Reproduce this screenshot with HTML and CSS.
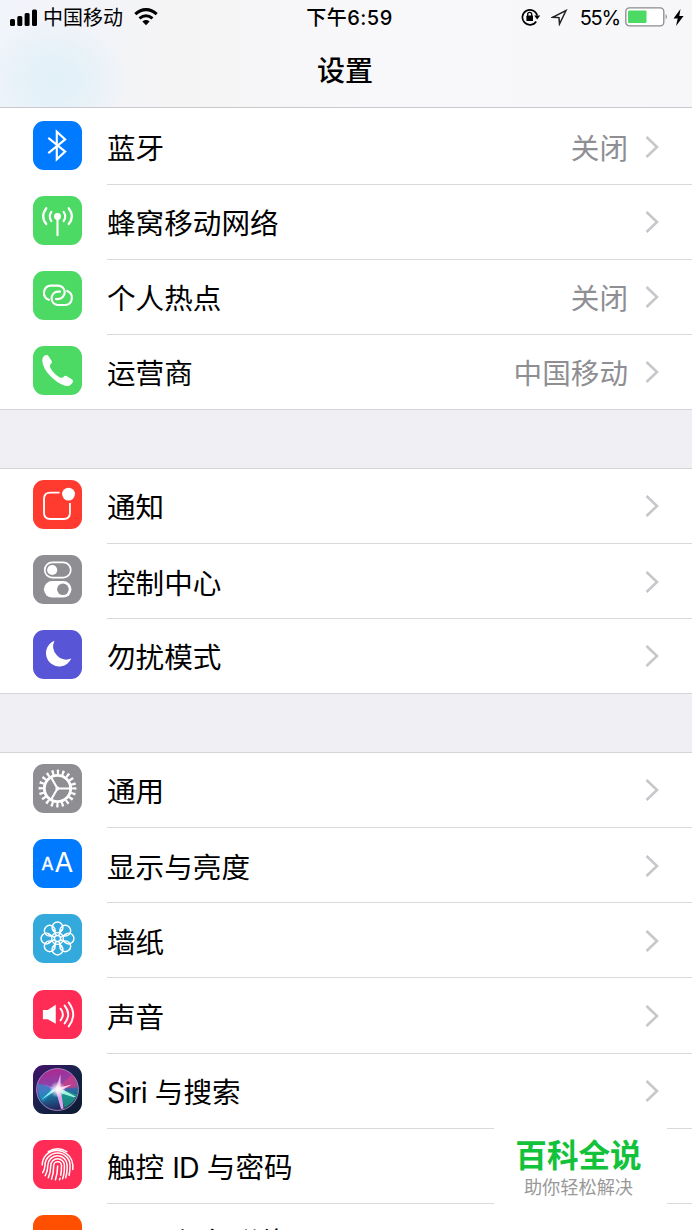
FILE: index.html
```
<!DOCTYPE html>
<html lang="zh-CN">
<head>
  <meta charset="UTF-8">
  <meta name="viewport" content="width=device-width, initial-scale=1.0">
  <title>设置</title>
  <link rel="stylesheet" href="styles.css">
</head>
<body>
  <svg width="0" height="0" class="defs">
    <symbol id="chevron" viewBox="0 0 14 24">
      <path d="M1.5 2 L12 12 L1.5 22" fill="none" stroke="#c7c7cc" stroke-width="2.6"/>
    </symbol>
  </svg>

  <header class="header">
    <div class="status">
      <div class="status-left">
        <svg class="signal" width="28" height="17" viewBox="0 0 28 17">
          <rect x="0" y="10" width="5" height="7" rx="1.5"/>
          <rect x="7.3" y="7" width="5" height="10" rx="1.5"/>
          <rect x="14.6" y="4" width="5" height="13" rx="1.5"/>
          <rect x="22" y="0.5" width="5" height="16.5" rx="1.5"/>
        </svg>
        <span class="carrier">中国移动</span>
        <svg class="wifi" width="24" height="18" viewBox="0 0 24 18">
          <path d="M1.3 6.1 Q12 -2.9 22.7 6.1" fill="none" stroke="#000" stroke-width="3.1"/>
          <path d="M5.5 10.4 Q12 5 18.5 10.4" fill="none" stroke="#000" stroke-width="3"/>
          <path d="M8.4 13.4 Q12 10.5 15.6 13.4 L12 17.2 Z"/>
        </svg>
      </div>
      <span class="clock">下午6:59</span>
      <div class="status-right">
        <svg class="lock" width="20" height="18" viewBox="0 0 20 18">
          <path d="M15.2 13.5 A7.5 7.5 0 1 1 16.2 7.5" fill="none" stroke="#000" stroke-width="1.7"/>
          <path d="M13.2 7.5 H19.2 L16.2 11.5 Z"/>
          <rect x="5.4" y="7.6" width="6.6" height="5.4" rx="0.6"/>
          <path d="M6.7 8 V6.3 a2 2 0 0 1 4 0 V8" fill="none" stroke="#000" stroke-width="1.3"/>
        </svg>
        <svg class="location" width="17" height="17" viewBox="0 0 17 17">
          <path d="M1.5 8.3 L15 1.5 L8.5 15 L8 8.6 Z" fill="none" stroke="#222" stroke-width="1.5"/>
        </svg>
        <span class="percent">55%</span>
        <svg class="battery" width="44" height="20" viewBox="0 0 44 20">
          <rect x="0.8" y="0.8" width="38" height="18" rx="3.6" fill="#fff" stroke="#8b8b8e" stroke-width="1.3"/>
          <rect x="3" y="3.5" width="18.5" height="12.5" rx="1" fill="#4cd964"/>
          <path d="M40.6 7 Q43.3 9.5 40.6 12.5 Z" fill="#8b8b8e"/>
        </svg>
        <svg class="bolt" width="11" height="17" viewBox="0 0 11 17">
          <path d="M7.5 0 L0.5 9.5 H4.7 L3 17 L10.6 7 H6.3 Z"/>
        </svg>
      </div>
    </div>
    <h1 class="title">设置</h1>
  </header>

  <main>
    <section class="group first">
      <div class="row">
        <svg class="icon blue" viewBox="0 0 48 48">
          <path d="M15 16.5 L31.5 30 L23.3 37.5 V10.5 L31.5 18 L15 31.5" fill="none" stroke="#fff" stroke-width="2.1"/>
        </svg>
        <div class="body"><span class="label">蓝牙</span><span class="value">关闭</span><svg class="chevron"><use href="#chevron"/></svg></div>
      </div>
      <div class="row">
        <svg class="icon green" viewBox="0 0 48 48">
          <circle cx="24" cy="20" r="3.4" fill="#fff"/>
          <g fill="none" stroke="#fff" stroke-width="2.1" stroke-linecap="round">
            <path d="M24 20 V38.5"/>
            <path d="M18 15.5 Q14.8 20 18 24.5 M30 15.5 Q33.2 20 30 24.5"/>
            <path d="M13 12 Q6.8 20 13 27.5 M35 12 Q41.2 20 35 27.5" stroke-width="2.3"/>
          </g>
        </svg>
        <div class="body"><span class="label">蜂窝移动网络</span><svg class="chevron"><use href="#chevron"/></svg></div>
      </div>
      <div class="row">
        <svg class="icon green" viewBox="0 0 48 48">
          <g fill="none" stroke="#fff" stroke-width="2.1" stroke-linecap="round">
            <path d="M15.5 28.2 A7.2 7.2 0 0 1 17 14.3 H24.5 A6.6 6.6 0 0 1 24.5 27.5 H22.5"/>
            <path d="M33.5 19.5 A7.2 7.2 0 0 1 32 33.3 H24 A6.6 6.6 0 0 1 24 20.2 H26.5"/>
          </g>
        </svg>
        <div class="body"><span class="label">个人热点</span><span class="value">关闭</span><svg class="chevron"><use href="#chevron"/></svg></div>
      </div>
      <div class="row">
        <svg class="icon green" viewBox="0 0 48 48">
          <path d="M9.500 11.500 Q10.500 9 13.200 8.700 Q14.500 8.700 15.300 10 L18.300 14.800 Q19 16.300 17.700 17.500 Q15.800 18.800 16.800 21 Q20.500 27.800 26.800 31 Q28.600 31.700 30 30 Q31.200 28.700 32.800 29.500 L38 32.500 Q39.800 33.700 39 35.200 Q37.200 38.800 34 39.200 Q29.500 39.300 22.800 34.500 Q12.500 27.200 9.500 17.500 Q8.500 13.800 9.500 11.500 Z" fill="#fff"/>
        </svg>
        <div class="body"><span class="label">运营商</span><span class="value">中国移动</span><svg class="chevron"><use href="#chevron"/></svg></div>
      </div>
    </section>

    <section class="group">
      <div class="row">
        <svg class="icon red" viewBox="0 0 48 48">
          <path d="M26 12.3 H17 Q10.8 12.3 10.8 18.5 V32 Q10.8 38.2 17 38.2 H30 Q36.2 38.2 36.2 32 V22.5" fill="none" stroke="#fff" stroke-width="1.8"/>
          <circle cx="34.8" cy="13.8" r="6.3" fill="#fff"/>
        </svg>
        <div class="body"><span class="label">通知</span><svg class="chevron"><use href="#chevron"/></svg></div>
      </div>
      <div class="row">
        <svg class="icon gray" viewBox="0 0 48 48">
          <rect x="11.5" y="7.3" width="25.5" height="14.8" rx="7.4" fill="none" stroke="#fff" stroke-width="1.7"/>
          <circle cx="18.8" cy="14.7" r="5" fill="#fff"/>
          <rect x="10.7" y="25.5" width="27" height="16.2" rx="8.1" fill="#fff"/>
          <circle cx="29.3" cy="33.6" r="5.7" fill="#8e8e93"/>
        </svg>
        <div class="body"><span class="label">控制中心</span><svg class="chevron"><use href="#chevron"/></svg></div>
      </div>
      <div class="row">
        <svg class="icon purple" viewBox="0 0 48 48">
          <path d="M21 10.5 A13 13 0 1 0 37.5 28 A13 13 0 0 1 21 10.5 Z" fill="#fff"/>
        </svg>
        <div class="body"><span class="label">勿扰模式</span><svg class="chevron"><use href="#chevron"/></svg></div>
      </div>
    </section>

    <section class="group">
      <div class="row">
        <svg class="icon gray" viewBox="0 0 48 48">
          <g fill="none" stroke="#fff">
            <circle cx="24" cy="24" r="16.2" stroke-width="4.6" stroke-dasharray="2.2 2.89" transform="rotate(-4 24 24)"/>
            <circle cx="24" cy="24" r="12.9" stroke-width="2.8"/>
            <path d="M24 24 H37 M24 24 L17.5 12.7 M24 24 L17.5 35.3" stroke-width="2.1"/>
          </g>
          <circle cx="24" cy="24" r="2" fill="#fff"/>
        </svg>
        <div class="body"><span class="label">通用</span><svg class="chevron"><use href="#chevron"/></svg></div>
      </div>
      <div class="row">
        <svg class="icon blue" viewBox="0 0 48 48">
          <g class="letters" fill="#fff">
            <text x="8.3" y="30.6" font-size="17" stroke="#fff" stroke-width="0.4">A</text>
            <text x="21" y="32.3" font-size="26.5">A</text>
          </g>
        </svg>
        <div class="body"><span class="label">显示与亮度</span><svg class="chevron"><use href="#chevron"/></svg></div>
      </div>
      <div class="row">
        <svg class="icon cyan" viewBox="0 0 48 48">
          <g fill="none" stroke="#fff" stroke-width="1.4">
            <circle cx="24" cy="13.2" r="5.3"/>
            <circle cx="31.6" cy="16.4" r="5.3"/>
            <circle cx="34.8" cy="24" r="5.3"/>
            <circle cx="31.6" cy="31.6" r="5.3"/>
            <circle cx="24" cy="34.8" r="5.3"/>
            <circle cx="16.4" cy="31.6" r="5.3"/>
            <circle cx="13.2" cy="24" r="5.3"/>
            <circle cx="16.4" cy="16.4" r="5.3"/>
            <circle cx="24" cy="24" r="3"/>
            <path d="M22.8 21 L19.8 15 M25.2 21 L28.2 15 M27 22.8 L33 19.8 M27 25.2 L33 28.2 M25.2 27 L28.2 33 M22.8 27 L19.8 33 M21 25.2 L15 28.2 M21 22.8 L15 19.8"/>
          </g>
        </svg>
        <div class="body"><span class="label">墙纸</span><svg class="chevron"><use href="#chevron"/></svg></div>
      </div>
      <div class="row">
        <svg class="icon pink" viewBox="0 0 48 48">
          <path d="M9.7 19.5 H14.5 L22.3 14.5 V33 L14.5 28.7 H9.7 Z" fill="#fff"/>
          <g fill="none" stroke="#fff" stroke-width="1.9" stroke-linecap="round">
            <path d="M27 18.3 Q31.5 24 27 29.7"/>
            <path d="M31 15.3 Q38 24 31 32.7"/>
            <path d="M35 12.3 Q43.8 24 35 35.7"/>
          </g>
        </svg>
        <div class="body"><span class="label">声音</span><svg class="chevron"><use href="#chevron"/></svg></div>
      </div>
      <div class="row">
        <svg class="icon siri" viewBox="0 0 48 48">
          <defs>
            <linearGradient id="siri-bg" x1="0" y1="0" x2="1" y2="1">
              <stop offset="0" stop-color="#43126a"/>
              <stop offset="0.5" stop-color="#17224b"/>
              <stop offset="1" stop-color="#0c1a2c"/>
            </linearGradient>
            <linearGradient id="siri-orb" x1="0.4" y1="0" x2="0.6" y2="1">
              <stop offset="0" stop-color="#b0278f"/>
              <stop offset="0.45" stop-color="#7e4bb0"/>
              <stop offset="0.62" stop-color="#1c6f9c"/>
              <stop offset="1" stop-color="#26194f"/>
            </linearGradient>
            <radialGradient id="siri-glow">
              <stop offset="0" stop-color="#fff"/>
              <stop offset="0.3" stop-color="#fff" stop-opacity="0.8"/>
              <stop offset="1" stop-color="#fff" stop-opacity="0"/>
            </radialGradient>
          </defs>
          <rect width="48" height="48" fill="url(#siri-bg)"/>
          <circle cx="24" cy="24" r="20.5" fill="url(#siri-orb)" stroke="#a98fc4" stroke-width="0.9"/>
          <path d="M24 23 L4.5 18 Q5 32 10 36 Z" fill="#1b9cd0" opacity="0.6"/>
          <path d="M24 23 L43 29 Q40 38 31 42 Z" fill="#19a98a" opacity="0.7"/>
          <path d="M24 23 L38 9 Q43 15 43 22 Z" fill="#d43d82" opacity="0.7"/>
          <path d="M24 24 L8 34 L21 22 Z" fill="#8ff3f2"/>
          <path d="M24 21 L42 31 L40 31.5 L22 26 Z" fill="#a0f5dc"/>
          <path d="M22 24 L27.5 43 L30 42.5 L27 23 Z" fill="#e3a4ee"/>
          <path d="M22 24 L27 9 L27 24 Z" fill="#efb0dc"/>
          <path d="M21 23 L38 19 L26 26 Z" fill="#f7c5e4"/>
          <path d="M26 24 L9 18 L23 26 Z" fill="#b36be0" opacity="0.7"/>
          <circle cx="24" cy="24" r="8" fill="url(#siri-glow)"/>
        </svg>
        <div class="body"><span class="label"><span class="latin">Siri</span> 与搜索</span><svg class="chevron"><use href="#chevron"/></svg></div>
      </div>
      <div class="row">
        <svg class="icon pink" viewBox="0 0 48 48">
          <g fill="none" stroke="#fff" stroke-width="1.5" stroke-linecap="round">
            <path d="M15 11.3 Q24 6 33 11.3"/>
            <path d="M9 24.5 Q9.300 18.500 13 14.500 A15.500 15.500 0 0 1 39 24.500 V29"/>
            <path d="M9.5 32 Q11.500 29 11.700 25 A12.300 12.300 0 0 1 36.300 25 Q36.300 31 35.300 34.500"/>
            <path d="M12 35 Q14.400 31 14.500 25 A9.500 9.500 0 0 1 33.500 25 Q33.500 32.500 32 37"/>
            <path d="M15 37 Q17.300 32 17.400 25 A6.700 6.700 0 0 1 30.800 25 Q30.800 33.500 29 38"/>
            <path d="M18.200 38.300 Q20.200 33 20.300 25 A3.800 3.800 0 0 1 27.900 25 Q27.900 31 27.200 34.500"/>
            <path d="M22 39 Q24.100 32.500 24.100 25.500 M26.500 37.500 L26 39"/>
          </g>
        </svg>
        <div class="body"><span class="label">触控 <span class="latin">ID</span> 与密码</span><svg class="chevron"><use href="#chevron"/></svg></div>
      </div>
      <div class="row">
        <svg class="icon orange" viewBox="0 0 48 48"></svg>
        <div class="body"><span class="label">SOS 紧急联络</span><svg class="chevron"><use href="#chevron"/></svg></div>
      </div>
    </section>
  </main>

  <div class="badge">
    <strong>百科全说</strong>
    <span>助你轻松解决</span>
  </div>
</body>
</html>
```
FILE: styles.css
```
* {
  box-sizing: border-box;
}

body {
  margin: 0;
  height: 1230px;
  overflow: hidden;
  position: relative;
  background: #efeff4;
  color: #000;
  font-family: Inter, "Noto Sans CJK SC", sans-serif;
}

.defs {
  display: block;
}

.header {
  height: 108px;
  border-bottom: 1px solid #c9c9cd;
  background:
    radial-gradient(ellipse 75px 65px at 55px 80px, #e1f0f8, rgba(225, 240, 248, 0.7) 45%, rgba(225, 240, 248, 0)),
    linear-gradient(90deg, #f2f4fb, #f4f4f5 25%, #f8f8fa 55%, #f7f7f9);
}

.status {
  display: grid;
  grid-template-columns: 1fr auto 1fr;
  align-items: center;
  height: 34px;
  padding: 0 8px 0 10px;
  font-size: 20px;
  line-height: 32px;
}

.status-left,
.status-right {
  display: flex;
  align-items: center;
}

.status-right {
  justify-content: flex-end;
}

.carrier {
  margin: 0 11px 0 5px;
  padding-top: 2px;
}

.clock {
  padding: 2px 0 0 5px;
  font-weight: 500;
  letter-spacing: 0.5px;
}

.location {
  margin: 0 12px 0 10px;
}

.percent {
  margin-right: 5px;
  padding-top: 1px;
  letter-spacing: -1.2px;
}

.bolt {
  margin-left: 4px;
}

.title {
  margin: 17px 2px 0 0;
  font-size: 28px;
  font-weight: 500;
  line-height: 41px;
  text-align: center;
}

.group {
  background: #fff;
  border-top: 1px solid #d5d5d9;
  border-bottom: 1px solid #d5d5d9;
  margin-bottom: 58px;
}

.group.first {
  border-top: 0;
  padding-top: 1.5px;
}

.row {
  display: flex;
  height: 75.2px;
  padding-left: 33px;
}

.row:last-child {
  height: 73.7px;
}

.icon {
  flex: none;
  width: 49px;
  height: 49px;
  margin: 11.3px 25px 0 0;
  border-radius: 11px;
}

.blue { background: #007aff; }
.green { background: #4cd964; }
.red { background: #ff3b30; }
.gray { background: #8e8e93; }
.purple { background: #5856d6; }
.cyan { background: #34aadc; }
.pink { background: #ff2d55; }
.orange { background: #ff4f00; }

.letters {
  font-family: Inter, sans-serif;
}

.body {
  flex: 1;
  display: flex;
  align-items: center;
  padding: 1px 33px 0 0;
  border-bottom: 1px solid #d9d9dc;
  font-size: 28.6px;
  line-height: 42px;
}

.row:last-child .body {
  border-bottom: 0;
}

.label {
  flex: 1;
  padding-top: 4px;
}

.latin {
  letter-spacing: -0.9px;
}

.value {
  padding-top: 4px;
  color: #8e8e93;
}

.chevron {
  width: 14px;
  height: 24px;
  margin-left: 17px;
}

.badge {
  position: absolute;
  left: 494px;
  top: 1124px;
  width: 173px;
  height: 84px;
  padding: 10px 4px 0 0;
  background: #fff;
  text-align: center;
}

.badge strong {
  display: block;
  color: #13c23b;
  font-size: 31.6px;
  font-weight: 700;
  line-height: 44px;
}

.badge span {
  display: block;
  color: #999;
  font-size: 18.2px;
  line-height: 18px;
}
```
